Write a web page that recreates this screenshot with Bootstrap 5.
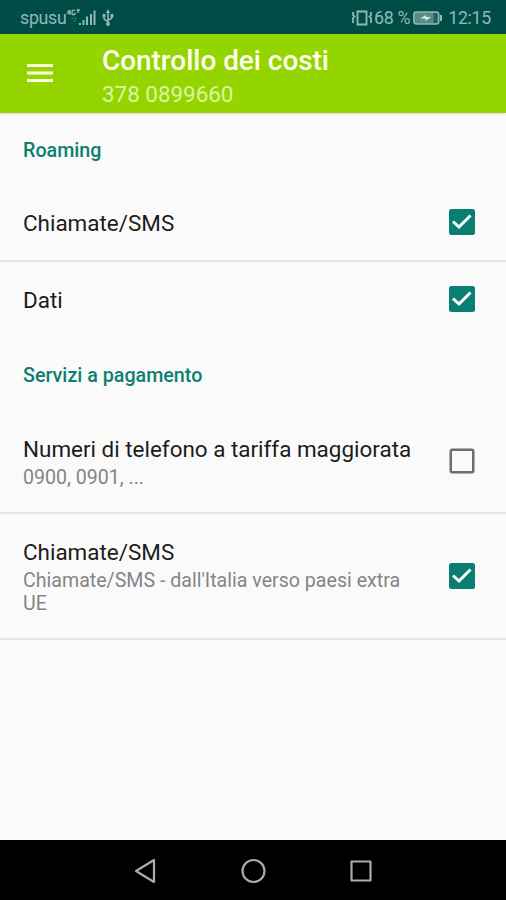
<!DOCTYPE html>
<html lang="it">
<head>
<meta charset="utf-8">
<meta name="viewport" content="width=device-width, initial-scale=1">
<title>Controllo dei costi</title>
<link href="https://cdn.jsdelivr.net/npm/bootstrap@5.3.0/dist/css/bootstrap.min.css" rel="stylesheet">
<style>
body{font-family:Roboto,"Liberation Sans",sans-serif;background:#fafafa;color:#1c1c1c}
svg{display:block;flex:none}
.status{height:34px;background:#004d47;color:#91b8b2;font-size:17.8px;letter-spacing:-.3px;line-height:32px;padding:2px 15px 0 20px}
.battery{margin:0 5px 0 3px}
.appbar{height:79px;background:#94d500;color:#fffff0;padding:10px 26px 0;box-shadow:0 1px 2px #0002}
.menu-btn{width:28px;margin-right:48px;padding-top:19px}
.app-title{font-size:27.9px;font-weight:500;line-height:34px}
.app-number{font-size:22.4px;line-height:32px;color:#dcf5a0}
.section-title{height:72px;padding:2px 23px 0;font-size:19.7px;font-weight:500;line-height:71px;color:#0b8071}
.section-paid{height:73px;padding-top:3px}
.setting{padding:0 31px 0 23px;border-bottom:2px solid #e4e4e4}
.setting-title{font-size:22.45px;line-height:30px;white-space:nowrap;padding-top:1px}
.setting-note{font-size:19.6px;line-height:23px;color:#858585;width:390px;padding-top:2px}
.row-call{height:77px}.row-data{height:75px;border:0}.row-premium{height:104px}.row-extra{height:126px}
.row-call svg,.row-data svg{margin-bottom:2px}
.row-premium .setting-title,.row-extra .setting-title{padding-top:0}
.navkeys{height:60px;background:#000;padding-left:133px;padding-top:1px}
</style>
</head>
<body>
<div class="d-flex flex-column vh-100 overflow-hidden">
  <header>
    <div class="status d-flex align-items-center justify-content-between">
      <div class="d-flex align-items-center">
        <span>spusu</span>
        <svg width="50" height="22" viewBox="0 0 50 22" fill="none" stroke="#91b8b2">
          <path d="M3 3L1.500 6H5M4 3V8M9 3.500Q6 2 6 5.500T9 7V5.500M10.500 3H14M12 3V6" stroke-width="1.3"/>
          <path d="M5 12q3-2 6 0M7 14h3" stroke="#2b766c"/>
          <path d="M14 16V18M17.500 13V18M21 9.500V18M25 7V18M28.500 3.500V18" stroke-width="2"/>
          <path d="M42 4V16M38 8V11Q38 13 42 14.500M46 8V10Q46 12 42 13" stroke-width="1.600"/>
          <path d="M40 6L42 2L44 6ZM36.500 7H39.500V10H36.500ZM44.500 7H47.500V10H44.500Z" fill="#91b8b2" stroke="none"/>
          <circle cx="42" cy="17" r="2" fill="#91b8b2" stroke="none"/>
        </svg>
      </div>
      <div class="d-flex align-items-center">
        <svg width="23" height="22" viewBox="0 0 23 22" fill="none" stroke="#91b8b2" stroke-width="1.800">
          <path d="M6.500 4.500H15.500V17.500H6.500Z"/><path d="M2 5V8L3.500 9.500L2 11V16M20 5V8L18.500 9.500L20 11V16"/>
        </svg>
        <span>68 %</span>
        <svg width="30" height="20" viewBox="0 0 30 20" class="battery">
          <rect x=".8" y="4" width="25" height="12" rx="2.500" fill="#588d85" stroke="#91b8b2" stroke-width="1.400"/>
          <path d="M20.500 5V15H24.500V5Z" fill="#1e6259"/><path d="M28 7V13" stroke="#91b8b2" stroke-width="2"/>
          <path d="M7 10.500L13 7V9H18L12.500 13V10.500Z" fill="#d7ebe5"/>
        </svg>
        <span>12:15</span>
      </div>
    </div>
    <div class="appbar d-flex align-items-start">
      <div class="menu-btn">
        <svg width="28" height="20" viewBox="0 0 28 20" stroke="#fbffdf" stroke-width="3"><path d="M1 2.500H27M1 10H27M1 17.500H27"/></svg>
      </div>
      <div><div class="app-title">Controllo dei costi</div><div class="app-number">378 0899660</div></div>
    </div>
  </header>
  <main class="flex-grow-1">
    <div class="section-title">Roaming</div>
    <div class="setting row-call d-flex align-items-center justify-content-between">
      <div class="setting-title">Chiamate/SMS</div>
      <svg width="26" height="26" viewBox="0 0 26 26"><rect width="26" height="26" rx="2.500" fill="#087f72"/><path d="M4 12.500L10 18L21.500 6.500" fill="none" stroke="#fff" stroke-width="3"/></svg>
    </div>
    <div class="setting row-data d-flex align-items-center justify-content-between">
      <div class="setting-title">Dati</div>
      <svg width="26" height="26" viewBox="0 0 26 26"><rect width="26" height="26" rx="2.500" fill="#087f72"/><path d="M4 12.500L10 18L21.500 6.500" fill="none" stroke="#fff" stroke-width="3"/></svg>
    </div>
    <div class="section-title section-paid">Servizi a pagamento</div>
    <div class="setting row-premium d-flex align-items-center justify-content-between">
      <div><div class="setting-title">Numeri di telefono a tariffa maggiorata</div><div class="setting-note">0900, 0901, ...</div></div>
      <svg width="26" height="26" viewBox="0 0 26 26"><rect x="1.750" y="1.750" width="22.500" height="22.500" rx="1.500" fill="none" stroke="#6d6d6d" stroke-width="2.500"/></svg>
    </div>
    <div class="setting row-extra d-flex align-items-center justify-content-between">
      <div><div class="setting-title">Chiamate/SMS</div><div class="setting-note">Chiamate/SMS - dall'Italia verso paesi extra UE</div></div>
      <svg width="26" height="26" viewBox="0 0 26 26"><rect width="26" height="26" rx="2.500" fill="#087f72"/><path d="M4 12.500L10 18L21.500 6.500" fill="none" stroke="#fff" stroke-width="3"/></svg>
    </div>
  </main>
  <footer class="navkeys d-flex align-items-center">
    <svg width="240" height="28" viewBox="0 0 240 28" fill="none" stroke="#ababab" stroke-width="2.200" stroke-linejoin="round"><path d="M21 3V25L3 14Z"/><circle cx="120.500" cy="14" r="11"/><rect x="218.500" y="4.500" width="19" height="19"/></svg>
  </footer>
</div>
<script src="https://cdn.jsdelivr.net/npm/bootstrap@5.3.0/dist/js/bootstrap.bundle.min.js"></script>
</body>
</html>
